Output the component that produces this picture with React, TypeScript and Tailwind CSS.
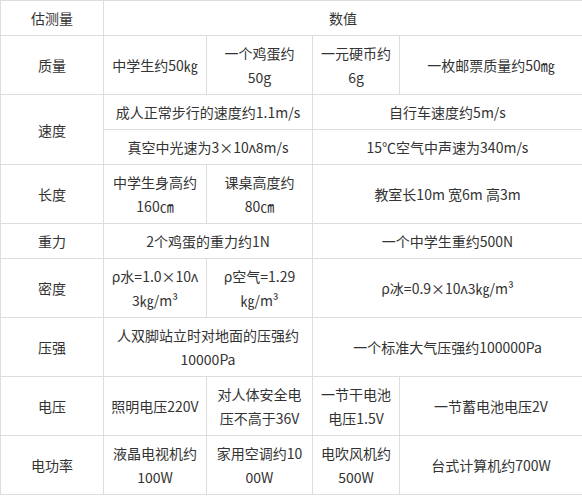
import type { FC, ReactNode } from "react";

type CellProps = {
    children: ReactNode;
    colSpan?: number;
    rowSpan?: number;
};

const Cell: FC<CellProps> = ({ children, colSpan, rowSpan }) => (
    <td
        colSpan={colSpan}
        rowSpan={rowSpan}
        className="border border-[#dddddd] px-[7px] py-[5px] text-center align-middle leading-6"
    >
        {children}
    </td>
);

// the source wraps these with break-all; lines are written out so they stay the same
const Lines: FC<{ lines: string[] }> = ({ lines }) => (
    <>
        {lines.map((line, i) => (
            <span key={i} className="block">
                {line}
            </span>
        ))}
    </>
);

const App: FC = () => {
    return (
        <div
            className="min-h-screen bg-white text-[14px] text-[#333333]"
            style={{ fontFamily: '"Noto Sans CJK SC", "Noto Sans", sans-serif' }}
        >
            <table className="w-[582px] table-fixed border-collapse">
                <colgroup>
                    <col className="w-[103px]" />
                    <col className="w-[103px]" />
                    <col className="w-[106px]" />
                    <col className="w-[87px]" />
                    <col className="w-[183px]" />
                </colgroup>
                <tbody>
                    <tr>
                        <Cell>估测量</Cell>
                        <Cell colSpan={4}>数值</Cell>
                    </tr>
                    <tr>
                        <Cell>质量</Cell>
                        <Cell>中学生约50㎏</Cell>
                        <Cell>
                            <Lines lines={["一个鸡蛋约", "50g"]} />
                        </Cell>
                        <Cell>
                            <Lines lines={["一元硬币约", "6g"]} />
                        </Cell>
                        <Cell>一枚邮票质量约50㎎</Cell>
                    </tr>
                    <tr>
                        <Cell rowSpan={2}>速度</Cell>
                        <Cell colSpan={2}>成人正常步行的速度约1.1m/s</Cell>
                        <Cell colSpan={2}>自行车速度约5m/s</Cell>
                    </tr>
                    <tr>
                        <Cell colSpan={2}>真空中光速为3×10ʌ8m/s</Cell>
                        <Cell colSpan={2}>15℃空气中声速为340m/s</Cell>
                    </tr>
                    <tr>
                        <Cell>长度</Cell>
                        <Cell>
                            <Lines lines={["中学生身高约", "160㎝"]} />
                        </Cell>
                        <Cell>
                            <Lines lines={["课桌高度约", "80㎝"]} />
                        </Cell>
                        <Cell colSpan={2}>教室长10m 宽6m 高3m</Cell>
                    </tr>
                    <tr>
                        <Cell>重力</Cell>
                        <Cell colSpan={2}>2个鸡蛋的重力约1N</Cell>
                        <Cell colSpan={2}>一个中学生重约500N</Cell>
                    </tr>
                    <tr>
                        <Cell>密度</Cell>
                        <Cell>
                            <Lines lines={["ρ水=1.0×10ʌ", "3㎏/m³"]} />
                        </Cell>
                        <Cell>
                            <Lines lines={["ρ空气=1.29", "㎏/m³"]} />
                        </Cell>
                        <Cell colSpan={2}>ρ冰=0.9×10ʌ3㎏/m³</Cell>
                    </tr>
                    <tr>
                        <Cell>压强</Cell>
                        <Cell colSpan={2}>
                            <Lines lines={["人双脚站立时对地面的压强约", "10000Pa"]} />
                        </Cell>
                        <Cell colSpan={2}>一个标准大气压强约100000Pa</Cell>
                    </tr>
                    <tr>
                        <Cell>电压</Cell>
                        <Cell>照明电压220V</Cell>
                        <Cell>
                            <Lines lines={["对人体安全电", "压不高于36V"]} />
                        </Cell>
                        <Cell>
                            <Lines lines={["一节干电池", "电压1.5V"]} />
                        </Cell>
                        <Cell>一节蓄电池电压2V</Cell>
                    </tr>
                    <tr>
                        <Cell>电功率</Cell>
                        <Cell>
                            <Lines lines={["液晶电视机约", "100W"]} />
                        </Cell>
                        <Cell>
                            <Lines lines={["家用空调约10", "00W"]} />
                        </Cell>
                        <Cell>
                            <Lines lines={["电吹风机约", "500W"]} />
                        </Cell>
                        <Cell>台式计算机约700W</Cell>
                    </tr>
                </tbody>
            </table>
        </div>
    );
};

export default App;
